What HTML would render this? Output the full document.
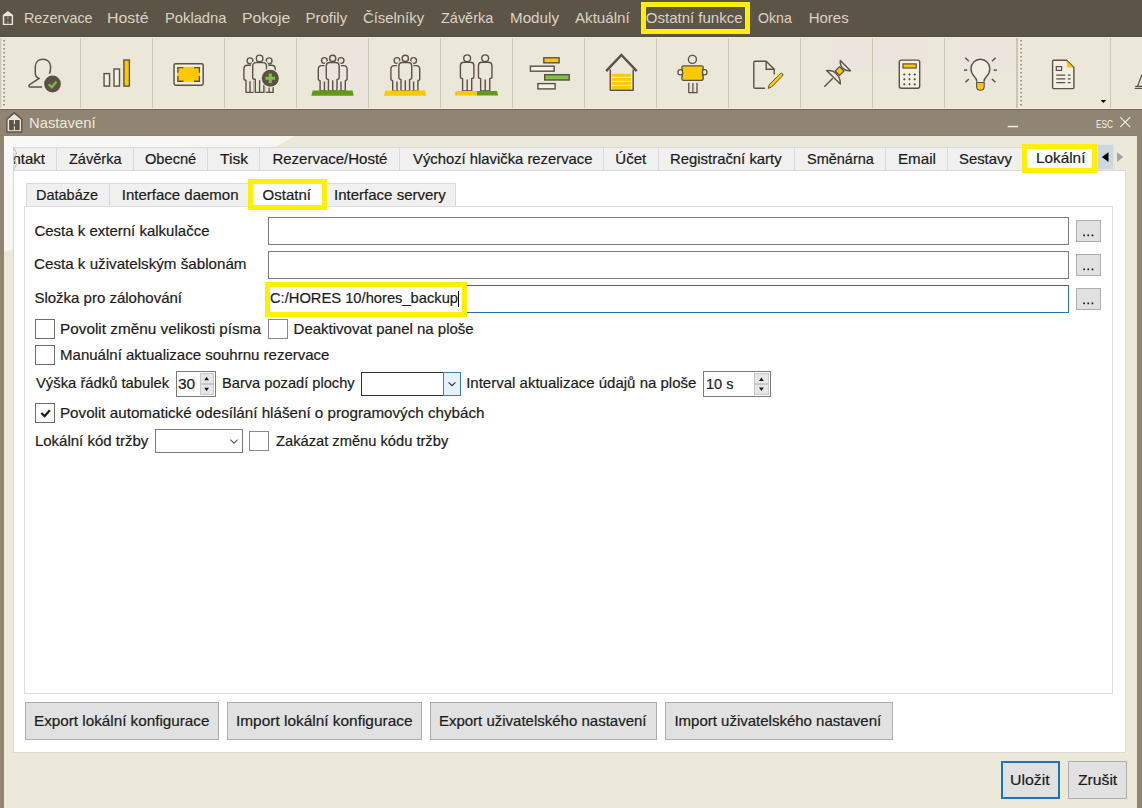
<!DOCTYPE html>
<html><head><meta charset="utf-8">
<style>
html,body{margin:0;padding:0;}
body{width:1142px;height:808px;overflow:hidden;position:relative;background:#ece9db;font-family:"Liberation Sans",sans-serif;}
.a{position:absolute;box-sizing:border-box;}
.tx{position:absolute;white-space:nowrap;line-height:normal;transform-origin:0 0;font-family:"Liberation Sans",sans-serif;-webkit-text-stroke:0.2px currentColor;}
.sep{position:absolute;top:38px;width:1px;height:70px;background:#cdc7b4;}
.tab{position:absolute;box-sizing:border-box;top:147px;height:24px;background:#f0f0f0;border:1px solid #d9d9d9;}
.stab{position:absolute;box-sizing:border-box;top:183px;height:24px;background:#f0f0f0;border:1px solid #d9d9d9;}
.inp{position:absolute;box-sizing:border-box;background:#fff;border:1px solid #7a7a7a;}
.dots{position:absolute;box-sizing:border-box;background:#e1e1e1;border:1px solid #adadad;width:25px;height:22px;}
.cb{position:absolute;box-sizing:border-box;background:#fff;border:1px solid #6e6e6e;width:20px;height:20px;}
.btn{position:absolute;box-sizing:border-box;background:#e1e1e1;border:1px solid #adadad;}
.yb{position:absolute;box-sizing:border-box;border:5px solid #fff000;}
</style></head><body>
<!-- MENU BAR -->
<div class="a" style="left:0;top:0;width:1142px;height:37px;background:#5d5448"></div>
<div class="a" style="left:0;top:36px;width:1142px;height:1px;background:#554c40"></div>
<div class="yb" style="left:641px;top:2px;width:109px;height:32px;"></div>
<!-- TOOLBAR -->
<div class="a" style="left:0;top:37px;width:1142px;height:73px;background:#ece8d9"></div>
<div class="a" style="left:0;top:37px;width:1142px;height:1px;background:#f1ecdc"></div>
<div class="a" style="left:0;top:108px;width:1142px;height:1px;background:#f3eee0"></div>
<div class="a" style="left:320px;top:38px;width:48px;height:70px;background:#ebe5de"></div>
<div class="a" style="left:832px;top:38px;width:97px;height:35px;background:#ebe5de"></div>
<div class="a" style="left:960px;top:38px;width:56px;height:35px;background:#ebe5de"></div>
<div class="sep" style="left:80px"></div>
<div class="sep" style="left:152px"></div>
<div class="sep" style="left:224px"></div>
<div class="sep" style="left:296px"></div>
<div class="sep" style="left:368px"></div>
<div class="sep" style="left:440px"></div>
<div class="sep" style="left:512px"></div>
<div class="sep" style="left:584px"></div>
<div class="sep" style="left:656px"></div>
<div class="sep" style="left:728px"></div>
<div class="sep" style="left:800px"></div>
<div class="sep" style="left:872px"></div>
<div class="sep" style="left:944px"></div>
<div class="sep" style="left:1016px;width:2px;background:#c9c4b2"></div>
<div class="sep" style="left:1110px"></div>
<div class="a" style="left:0;top:109px;width:1142px;height:1px;background:#71685a"></div>
<!-- TITLE BAR -->
<div class="a" style="left:0;top:110px;width:1142px;height:26px;background:#8f8572"></div>
<div class="a" style="left:0;top:135px;width:1137px;height:1px;background:#8a806d"></div>
<!-- DIALOG BODY -->
<div class="a" style="left:4px;top:136px;width:1133px;height:672px;background:#ece9db"></div>
<svg class="a" style="left:0;top:0" width="1142" height="808"><defs><linearGradient id="wg" gradientUnits="userSpaceOnUse" x1="4" y1="136" x2="150" y2="400"><stop offset="0" stop-color="#f8f8f6"/><stop offset="0.55" stop-color="#f6f5f1"/><stop offset="1" stop-color="#efede5"/></linearGradient></defs><path d="M4,136 H295 Q200,190 4,252 Z" fill="url(#wg)"/></svg>
<div class="a" style="left:0;top:136px;width:4px;height:672px;background:#8f8572"></div>
<div class="a" style="left:1137px;top:136px;width:5px;height:672px;background:#8f8572"></div>
<!-- TAB PANEL -->
<div class="a" style="left:13px;top:170px;width:1113px;height:583px;background:#fff;border:1px solid #dadada"></div>
<!-- TABS -->
<div class="tab" style="left:13px;width:44px"></div>
<div class="tab" style="left:56px;width:78px"></div>
<div class="tab" style="left:133px;width:75px"></div>
<div class="tab" style="left:207px;width:53px"></div>
<div class="tab" style="left:259px;width:141px"></div>
<div class="tab" style="left:399px;width:205px"></div>
<div class="tab" style="left:603px;width:56px"></div>
<div class="tab" style="left:658px;width:137px"></div>
<div class="tab" style="left:794px;width:92px"></div>
<div class="tab" style="left:885px;width:63px"></div>
<div class="tab" style="left:947px;width:76px"></div>
<div class="a" style="left:1022px;top:144px;width:75px;height:29px;background:#fff"></div>
<div class="yb" style="left:1022px;top:144px;width:75px;height:29px;"></div>
<div class="a" style="left:1097px;top:144px;width:17px;height:26px;background:#cdd8db;border:1px solid #dce5e7"></div>
<!-- SUBTABS -->
<div class="stab" style="left:26px;width:84px"></div>
<div class="stab" style="left:109px;width:141px"></div>
<div class="stab" style="left:326px;width:130px"></div>
<!-- INNER PANEL -->
<div class="a" style="left:24px;top:206px;width:1089px;height:488px;background:#fff;border:1px solid #dcdcdc"></div>
<div class="a" style="left:253px;top:184px;width:69px;height:23px;background:#fff"></div>
<div class="yb" style="left:248px;top:179px;width:79px;height:31px;"></div>
<!-- INPUTS -->
<div class="inp" style="left:268px;top:217px;width:801px;height:28px"></div>
<div class="inp" style="left:268px;top:251px;width:801px;height:28px"></div>
<div class="inp" style="left:268px;top:285px;width:801px;height:28px;border-color:#2c6ea8"></div>
<div class="dots" style="left:1076px;top:220px"></div>
<div class="dots" style="left:1076px;top:254px"></div>
<div class="dots" style="left:1076px;top:288px"></div>
<div class="yb" style="left:265px;top:282px;width:202px;height:35px;"></div>
<div class="a" style="left:458px;top:291px;width:1px;height:16px;background:#000"></div>
<!-- CHECKBOXES -->
<div class="cb" style="left:35px;top:319px"></div>
<div class="cb" style="left:268px;top:319px;border-color:#8a8a8a"></div>
<div class="cb" style="left:35px;top:345px"></div>
<div class="cb" style="left:35px;top:403px"></div>
<div class="cb" style="left:249px;top:431px;border-color:#8a8a8a"></div>
<!-- SPIN 30 -->
<div class="inp" style="left:176px;top:371px;width:40px;height:26px"></div>
<div class="a" style="left:200px;top:373px;width:14px;height:11px;background:#e6e6e6;border:1px solid #c8c8c8"></div>
<div class="a" style="left:200px;top:384px;width:14px;height:11px;background:#e6e6e6;border:1px solid #c8c8c8"></div>
<!-- COLOR COMBO -->
<div class="inp" style="left:361px;top:372px;width:100px;height:24px;border-color:#333"></div>
<div class="a" style="left:443px;top:372px;width:18px;height:24px;background:#e5f1fb;border:1px solid #3c7fb1"></div>
<!-- SPIN 10 s -->
<div class="inp" style="left:703px;top:371px;width:68px;height:26px"></div>
<div class="a" style="left:754px;top:373px;width:15px;height:11px;background:#e6e6e6;border:1px solid #c8c8c8"></div>
<div class="a" style="left:754px;top:384px;width:15px;height:11px;background:#e6e6e6;border:1px solid #c8c8c8"></div>
<!-- LOCAL CODE COMBO -->
<div class="inp" style="left:155px;top:429px;width:88px;height:24px"></div>
<!-- BUTTONS -->
<div class="btn" style="left:25px;top:702px;width:194px;height:38px"></div>
<div class="btn" style="left:227px;top:702px;width:195px;height:38px"></div>
<div class="btn" style="left:430px;top:702px;width:227px;height:38px"></div>
<div class="btn" style="left:665px;top:702px;width:228px;height:38px"></div>
<div class="btn" style="left:1001px;top:761px;width:59px;height:38px;border:2px solid #1a72c2"></div>
<div class="btn" style="left:1068px;top:761px;width:59px;height:38px"></div>
<!-- TEXT -->
<div class="a" style="left:14px;top:147px;width:31px;height:24px;overflow:hidden"><span class="tx" style="right:0px;top:3px;font-size:15px;color:#1b1b1b">Kontakt</span></div>
<span class="tx" style="left:23.54px;top:9px;font-size:15px;color:#dcd3c1;transform:scaleX(0.9557);-webkit-text-stroke:0;">Rezervace</span>
<span class="tx" style="left:107.44px;top:9px;font-size:15px;color:#dcd3c1;transform:scaleX(1.0605);-webkit-text-stroke:0;">Hosté</span>
<span class="tx" style="left:164.72px;top:9px;font-size:15px;color:#dcd3c1;transform:scaleX(0.9823);-webkit-text-stroke:0;">Pokladna</span>
<span class="tx" style="left:242.35px;top:9px;font-size:15px;color:#dcd3c1;transform:scaleX(1.0523);-webkit-text-stroke:0;">Pokoje</span>
<span class="tx" style="left:305.50px;top:9px;font-size:15px;color:#dcd3c1;-webkit-text-stroke:0;">Profily</span>
<span class="tx" style="left:363.01px;top:9px;font-size:15px;color:#dcd3c1;transform:scaleX(0.9902);-webkit-text-stroke:0;">Číselníky</span>
<span class="tx" style="left:441.40px;top:9px;font-size:15px;color:#dcd3c1;transform:scaleX(0.9648);-webkit-text-stroke:0;">Závěrka</span>
<span class="tx" style="left:509.79px;top:9px;font-size:15px;color:#dcd3c1;transform:scaleX(1.0128);-webkit-text-stroke:0;">Moduly</span>
<span class="tx" style="left:575.40px;top:9px;font-size:15px;color:#dcd3c1;transform:scaleX(1.0093);-webkit-text-stroke:0;">Aktuální</span>
<span class="tx" style="left:645.80px;top:9px;font-size:15px;color:#dcd3c1;-webkit-text-stroke:0;">Ostatní funkce</span>
<span class="tx" style="left:758.36px;top:9px;font-size:15px;color:#dcd3c1;transform:scaleX(0.9429);-webkit-text-stroke:0;">Okna</span>
<span class="tx" style="left:808.70px;top:9px;font-size:15px;color:#dcd3c1;-webkit-text-stroke:0;">Hores</span>
<span class="tx" style="left:29.02px;top:114px;font-size:15px;color:#efe9dc;transform:scaleX(0.9848);-webkit-text-stroke:0;">Nastavení</span>
<span class="tx" style="left:1095.58px;top:119px;font-size:10px;color:#f4f0e8;transform:scaleX(0.8211);-webkit-text-stroke:0;">ESC</span>
<span class="tx" style="left:69.00px;top:150px;font-size:15px;color:#1b1b1b;transform:scaleX(0.9685);">Závěrka</span>
<span class="tx" style="left:145.33px;top:150px;font-size:15px;color:#1b1b1b;transform:scaleX(0.9745);">Obecné</span>
<span class="tx" style="left:220.00px;top:150px;font-size:15px;color:#1b1b1b;transform:scaleX(1.0370);">Tisk</span>
<span class="tx" style="left:272.40px;top:150px;font-size:15px;color:#1b1b1b;">Rezervace/Hosté</span>
<span class="tx" style="left:412.60px;top:150px;font-size:15px;color:#1b1b1b;transform:scaleX(0.9873);">Výchozí hlavička rezervace</span>
<span class="tx" style="left:615.30px;top:150px;font-size:15px;color:#1b1b1b;">Účet</span>
<span class="tx" style="left:670.41px;top:150px;font-size:15px;color:#1b1b1b;transform:scaleX(0.9920);">Registrační karty</span>
<span class="tx" style="left:806.63px;top:150px;font-size:15px;color:#1b1b1b;transform:scaleX(0.9662);">Směnárna</span>
<span class="tx" style="left:897.59px;top:150px;font-size:15px;color:#1b1b1b;transform:scaleX(1.0111);">Email</span>
<span class="tx" style="left:959.31px;top:150px;font-size:15px;color:#1b1b1b;transform:scaleX(0.9904);">Sestavy</span>
<span class="tx" style="left:1035.58px;top:149px;font-size:15px;color:#1b1b1b;transform:scaleX(1.0213);">Lokální</span>
<span class="tx" style="left:35.83px;top:186px;font-size:15px;color:#1b1b1b;transform:scaleX(0.9651);">Databáze</span>
<span class="tx" style="left:121.80px;top:186px;font-size:15px;color:#1b1b1b;">Interface daemon</span>
<span class="tx" style="left:262.60px;top:186px;font-size:15px;color:#1b1b1b;">Ostatní</span>
<span class="tx" style="left:334.10px;top:186px;font-size:15px;color:#1b1b1b;">Interface servery</span>
<span class="tx" style="left:34.40px;top:222px;font-size:15px;color:#1b1b1b;">Cesta k externí kalkulačce</span>
<span class="tx" style="left:34.39px;top:255px;font-size:15px;color:#1b1b1b;transform:scaleX(1.0115);">Cesta k uživatelským šablonám</span>
<span class="tx" style="left:34.40px;top:289px;font-size:15px;color:#1b1b1b;">Složka pro zálohování</span>
<span class="tx" style="left:270.12px;top:289px;font-size:15px;color:#1b1b1b;transform:scaleX(0.9805);">C:/HORES 10/hores_backup</span>
<span class="tx" style="left:60.08px;top:320px;font-size:15px;color:#1b1b1b;transform:scaleX(1.0219);">Povolit změnu velikosti písma</span>
<span class="tx" style="left:293.60px;top:320px;font-size:15px;color:#1b1b1b;">Deaktivovat panel na ploše</span>
<span class="tx" style="left:60.10px;top:346px;font-size:15px;color:#1b1b1b;">Manuální aktualizace souhrnu rezervace</span>
<span class="tx" style="left:35.90px;top:374px;font-size:15px;color:#1b1b1b;transform:scaleX(0.9859);">Výška řádků tabulek</span>
<span class="tx" style="left:178.37px;top:375px;font-size:15px;color:#1b1b1b;transform:scaleX(1.0267);">30</span>
<span class="tx" style="left:221.92px;top:374px;font-size:15px;color:#1b1b1b;transform:scaleX(0.9756);">Barva pozadí plochy</span>
<span class="tx" style="left:466.20px;top:374px;font-size:15px;color:#1b1b1b;">Interval aktualizace údajů na ploše</span>
<span class="tx" style="left:706.03px;top:375px;font-size:15px;color:#1b1b1b;transform:scaleX(0.9704);">10 s</span>
<span class="tx" style="left:59.99px;top:404px;font-size:15px;color:#1b1b1b;transform:scaleX(1.0120);">Povolit automatické odesílání hlášení o programových chybách</span>
<span class="tx" style="left:34.90px;top:432px;font-size:15px;color:#1b1b1b;">Lokální kód tržby</span>
<span class="tx" style="left:275.90px;top:432px;font-size:15px;color:#1b1b1b;transform:scaleX(0.9790);">Zakázat změnu kódu tržby</span>
<span class="tx" style="left:33.98px;top:712px;font-size:15px;color:#1b1b1b;transform:scaleX(1.0164);">Export lokální konfigurace</span>
<span class="tx" style="left:235.87px;top:712px;font-size:15px;color:#1b1b1b;transform:scaleX(1.0276);">Import lokální konfigurace</span>
<span class="tx" style="left:438.90px;top:712px;font-size:15px;color:#1b1b1b;">Export uživatelského nastavení</span>
<span class="tx" style="left:674.40px;top:712px;font-size:15px;color:#1b1b1b;">Import uživatelského nastavení</span>
<span class="tx" style="left:1009.94px;top:771px;font-size:15px;color:#1b1b1b;transform:scaleX(1.0583);">Uložit</span>
<span class="tx" style="left:1077.80px;top:771px;font-size:15px;color:#1b1b1b;transform:scaleX(1.0459);">Zrušit</span>
<!-- ICONS -->
<svg class="a" style="left:0;top:0" width="1142" height="808" viewBox="0 0 1142 808">
<path d="M2.8,25 V14.9 L7.9,10.9 L13.1,14.9 V25 Z" fill="#ebe5d4"/>
<rect x="4.3" y="16.1" width="7.3" height="7.7" fill="#5d5448"/>
<path d="M7.95,16.1 V19.3 M7.95,20.8 V23.8" stroke="#9a9183" stroke-width="1.2"/>
<path d="M6.9,132 V119.3 L14.3,112.9 L21.7,119.3 V132 Z" fill="#eee8dc" stroke="#5d5448" stroke-width="1.4" stroke-linejoin="round"/>
<rect x="9.1" y="120" width="10.6" height="10.2" fill="#5d5448"/>
<path d="M14.4,120 V124.2 M14.4,126.2 V130.2" stroke="#eee8dc" stroke-width="1.1"/>
<rect x="1007.7" y="125.8" width="10.3" height="1.5" fill="#f2eee6"/>
<path d="M1120.2,117.2 L1130.2,127.2 M1130.2,117.2 L1120.2,127.2" stroke="#f4f1ea" stroke-width="1.1"/>
<rect x="0" y="38" width="1.5" height="70" fill="#d2ccbb"/>
<rect x="2.4000000000000004" y="40.9" width="1.6" height="1.6" fill="#fbfaf5"/>
<rect x="3.2" y="40" width="1.6" height="1.6" fill="#8c8779"/>
<rect x="2.4000000000000004" y="44.9" width="1.6" height="1.6" fill="#fbfaf5"/>
<rect x="3.2" y="44" width="1.6" height="1.6" fill="#8c8779"/>
<rect x="2.4000000000000004" y="48.9" width="1.6" height="1.6" fill="#fbfaf5"/>
<rect x="3.2" y="48" width="1.6" height="1.6" fill="#8c8779"/>
<rect x="2.4000000000000004" y="52.9" width="1.6" height="1.6" fill="#fbfaf5"/>
<rect x="3.2" y="52" width="1.6" height="1.6" fill="#8c8779"/>
<rect x="2.4000000000000004" y="56.9" width="1.6" height="1.6" fill="#fbfaf5"/>
<rect x="3.2" y="56" width="1.6" height="1.6" fill="#8c8779"/>
<rect x="2.4000000000000004" y="60.9" width="1.6" height="1.6" fill="#fbfaf5"/>
<rect x="3.2" y="60" width="1.6" height="1.6" fill="#8c8779"/>
<rect x="2.4000000000000004" y="64.9" width="1.6" height="1.6" fill="#fbfaf5"/>
<rect x="3.2" y="64" width="1.6" height="1.6" fill="#8c8779"/>
<rect x="2.4000000000000004" y="68.9" width="1.6" height="1.6" fill="#fbfaf5"/>
<rect x="3.2" y="68" width="1.6" height="1.6" fill="#8c8779"/>
<rect x="2.4000000000000004" y="72.9" width="1.6" height="1.6" fill="#fbfaf5"/>
<rect x="3.2" y="72" width="1.6" height="1.6" fill="#8c8779"/>
<rect x="2.4000000000000004" y="76.9" width="1.6" height="1.6" fill="#fbfaf5"/>
<rect x="3.2" y="76" width="1.6" height="1.6" fill="#8c8779"/>
<rect x="2.4000000000000004" y="80.9" width="1.6" height="1.6" fill="#fbfaf5"/>
<rect x="3.2" y="80" width="1.6" height="1.6" fill="#8c8779"/>
<rect x="2.4000000000000004" y="84.9" width="1.6" height="1.6" fill="#fbfaf5"/>
<rect x="3.2" y="84" width="1.6" height="1.6" fill="#8c8779"/>
<rect x="2.4000000000000004" y="88.9" width="1.6" height="1.6" fill="#fbfaf5"/>
<rect x="3.2" y="88" width="1.6" height="1.6" fill="#8c8779"/>
<rect x="2.4000000000000004" y="92.9" width="1.6" height="1.6" fill="#fbfaf5"/>
<rect x="3.2" y="92" width="1.6" height="1.6" fill="#8c8779"/>
<rect x="2.4000000000000004" y="96.9" width="1.6" height="1.6" fill="#fbfaf5"/>
<rect x="3.2" y="96" width="1.6" height="1.6" fill="#8c8779"/>
<rect x="2.4000000000000004" y="100.9" width="1.6" height="1.6" fill="#fbfaf5"/>
<rect x="3.2" y="100" width="1.6" height="1.6" fill="#8c8779"/>
<rect x="2.4000000000000004" y="104.9" width="1.6" height="1.6" fill="#fbfaf5"/>
<rect x="3.2" y="104" width="1.6" height="1.6" fill="#8c8779"/>
<rect x="1019.4000000000001" y="40.9" width="1.6" height="1.6" fill="#fbfaf5"/>
<rect x="1020.2" y="40" width="1.6" height="1.6" fill="#8c8779"/>
<rect x="1019.4000000000001" y="44.9" width="1.6" height="1.6" fill="#fbfaf5"/>
<rect x="1020.2" y="44" width="1.6" height="1.6" fill="#8c8779"/>
<rect x="1019.4000000000001" y="48.9" width="1.6" height="1.6" fill="#fbfaf5"/>
<rect x="1020.2" y="48" width="1.6" height="1.6" fill="#8c8779"/>
<rect x="1019.4000000000001" y="52.9" width="1.6" height="1.6" fill="#fbfaf5"/>
<rect x="1020.2" y="52" width="1.6" height="1.6" fill="#8c8779"/>
<rect x="1019.4000000000001" y="56.9" width="1.6" height="1.6" fill="#fbfaf5"/>
<rect x="1020.2" y="56" width="1.6" height="1.6" fill="#8c8779"/>
<rect x="1019.4000000000001" y="60.9" width="1.6" height="1.6" fill="#fbfaf5"/>
<rect x="1020.2" y="60" width="1.6" height="1.6" fill="#8c8779"/>
<rect x="1019.4000000000001" y="64.9" width="1.6" height="1.6" fill="#fbfaf5"/>
<rect x="1020.2" y="64" width="1.6" height="1.6" fill="#8c8779"/>
<rect x="1019.4000000000001" y="68.9" width="1.6" height="1.6" fill="#fbfaf5"/>
<rect x="1020.2" y="68" width="1.6" height="1.6" fill="#8c8779"/>
<rect x="1019.4000000000001" y="72.9" width="1.6" height="1.6" fill="#fbfaf5"/>
<rect x="1020.2" y="72" width="1.6" height="1.6" fill="#8c8779"/>
<rect x="1019.4000000000001" y="76.9" width="1.6" height="1.6" fill="#fbfaf5"/>
<rect x="1020.2" y="76" width="1.6" height="1.6" fill="#8c8779"/>
<rect x="1019.4000000000001" y="80.9" width="1.6" height="1.6" fill="#fbfaf5"/>
<rect x="1020.2" y="80" width="1.6" height="1.6" fill="#8c8779"/>
<rect x="1019.4000000000001" y="84.9" width="1.6" height="1.6" fill="#fbfaf5"/>
<rect x="1020.2" y="84" width="1.6" height="1.6" fill="#8c8779"/>
<rect x="1019.4000000000001" y="88.9" width="1.6" height="1.6" fill="#fbfaf5"/>
<rect x="1020.2" y="88" width="1.6" height="1.6" fill="#8c8779"/>
<rect x="1019.4000000000001" y="92.9" width="1.6" height="1.6" fill="#fbfaf5"/>
<rect x="1020.2" y="92" width="1.6" height="1.6" fill="#8c8779"/>
<rect x="1019.4000000000001" y="96.9" width="1.6" height="1.6" fill="#fbfaf5"/>
<rect x="1020.2" y="96" width="1.6" height="1.6" fill="#8c8779"/>
<rect x="1019.4000000000001" y="100.9" width="1.6" height="1.6" fill="#fbfaf5"/>
<rect x="1020.2" y="100" width="1.6" height="1.6" fill="#8c8779"/>
<rect x="1019.4000000000001" y="104.9" width="1.6" height="1.6" fill="#fbfaf5"/>
<rect x="1020.2" y="104" width="1.6" height="1.6" fill="#8c8779"/>
<path d="M49.6,73.8 C50.4,71.5 50.6,68.5 50.6,66.8 C50.6,62 47.3,59.3 42.9,59.3 C38.5,59.3 35.3,62.2 35.3,66.8 L35.3,73 C35.3,76 37,77.8 39.2,78.4 L29.6,84.6 C28.4,85.4 28.9,87.1 30.2,87.1 L42,87.1" fill="none" stroke="#5b5145" stroke-width="1.5" stroke-linejoin="round"/>
<circle cx="52.5" cy="84" r="8.4" fill="#5b5145"/>
<path d="M48.7,84.3 L51.8,87.3 L56.4,81.6" fill="none" stroke="#7dc142" stroke-width="2.2"/>
<rect x="104.05" y="73.6" width="5.5" height="12.5" fill="#f3efe2" stroke="#5b5145" stroke-width="1.4"/>
<rect x="114.0" y="69.0" width="5.5" height="17.1" fill="#f3efe2" stroke="#5b5145" stroke-width="1.4"/>
<rect x="123.9" y="60.0" width="5.5" height="26.1" fill="#fbc900" stroke="#5b5145" stroke-width="1.4"/>
<rect x="174.05" y="63.75" width="29.1" height="21.4" rx="1.6" fill="#f3efe2" stroke="#5b5145" stroke-width="1.5"/>
<rect x="177.2" y="66.9" width="22.8" height="14.9" fill="#fbc900"/>
<path d="M177.9,72.8 V67.6 H183.4 M194.0,67.6 H199.4 V72.8 M199.4,76.0 V81.2 H194.0 M183.4,81.2 H177.9 V76.0" fill="none" stroke="#5b5145" stroke-width="1.4"/>
<path d="M246.00,92.40 V80.50 L244.90,80.00 Q243.90,80.00 243.90,79.00 V68.80 Q243.90,65.20 247.50,65.20 H252.50 Q256.10,65.20 256.10,68.80 V79.00 Q256.10,80.00 255.10,80.00 L254.00,80.50 V92.40 Z" fill="#ece8d9" stroke="#5b5145" stroke-width="1.4" stroke-linejoin="round"/>
<path d="M250.00,92.40 V81.20" stroke="#5b5145" stroke-width="1.4"/>
<circle cx="250.00" cy="60.80" r="2.90" fill="#ece8d9" stroke="#5b5145" stroke-width="1.4"/>
<path d="M265.10,92.40 V80.50 L264.00,80.00 Q263.00,80.00 263.00,79.00 V68.80 Q263.00,65.20 266.60,65.20 H271.60 Q275.20,65.20 275.20,68.80 V79.00 Q275.20,80.00 274.20,80.00 L273.10,80.50 V92.40 Z" fill="#ece8d9" stroke="#5b5145" stroke-width="1.4" stroke-linejoin="round"/>
<path d="M269.10,92.40 V81.20" stroke="#5b5145" stroke-width="1.4"/>
<circle cx="269.10" cy="60.80" r="2.90" fill="#ece8d9" stroke="#5b5145" stroke-width="1.4"/>
<path d="M255.30,92.40 V79.50 L253.70,79.00 Q252.70,79.00 252.70,78.00 V66.20 Q252.70,62.60 256.30,62.60 H262.90 Q266.50,62.60 266.50,66.20 V78.00 Q266.50,79.00 265.50,79.00 L263.90,79.50 V92.40 Z" fill="#ece8d9" stroke="#ece8d9" stroke-width="3.6" stroke-linejoin="round"/>
<circle cx="259.60" cy="58.40" r="3.30" fill="#ece8d9" stroke="#ece8d9" stroke-width="3.6"/>
<path d="M255.30,92.40 V79.50 L253.70,79.00 Q252.70,79.00 252.70,78.00 V66.20 Q252.70,62.60 256.30,62.60 H262.90 Q266.50,62.60 266.50,66.20 V78.00 Q266.50,79.00 265.50,79.00 L263.90,79.50 V92.40 Z" fill="#ece8d9" stroke="#5b5145" stroke-width="1.4" stroke-linejoin="round"/>
<path d="M259.60,92.40 V80.20" stroke="#5b5145" stroke-width="1.4"/>
<circle cx="259.60" cy="58.40" r="3.30" fill="#ece8d9" stroke="#5b5145" stroke-width="1.4"/>
<circle cx="270.3" cy="78.2" r="9.6" fill="#ece8d9"/>
<circle cx="270.3" cy="78.2" r="8.5" fill="#5b5145"/>
<path d="M270.3,73.4 V83.0 M265.5,78.2 H275.1" stroke="#7dc142" stroke-width="3"/>
<path d="M320.10,91.00 V80.80 L319.30,80.30 Q318.30,80.30 318.30,79.30 V69.20 Q318.30,65.60 321.90,65.60 H326.90 Q330.50,65.60 330.50,69.20 V79.30 Q330.50,80.30 329.50,80.30 L328.70,80.80 V91.00 Z" fill="#ebe5de" stroke="#5b5145" stroke-width="1.4" stroke-linejoin="round"/>
<path d="M324.40,91.00 V81.50" stroke="#5b5145" stroke-width="1.4"/>
<circle cx="324.40" cy="60.50" r="2.90" fill="#ebe5de" stroke="#5b5145" stroke-width="1.4"/>
<path d="M336.70,91.00 V80.80 L335.90,80.30 Q334.90,80.30 334.90,79.30 V69.20 Q334.90,65.60 338.50,65.60 H343.50 Q347.10,65.60 347.10,69.20 V79.30 Q347.10,80.30 346.10,80.30 L345.30,80.80 V91.00 Z" fill="#ebe5de" stroke="#5b5145" stroke-width="1.4" stroke-linejoin="round"/>
<path d="M341.00,91.00 V81.50" stroke="#5b5145" stroke-width="1.4"/>
<circle cx="341.00" cy="60.50" r="2.90" fill="#ebe5de" stroke="#5b5145" stroke-width="1.4"/>
<path d="M328.40,91.00 V79.60 L327.25,79.10 Q326.25,79.10 326.25,78.10 V66.10 Q326.25,62.50 329.85,62.50 H335.55 Q339.15,62.50 339.15,66.10 V78.10 Q339.15,79.10 338.15,79.10 L337.00,79.60 V91.00 Z" fill="#ebe5de" stroke="#ebe5de" stroke-width="3.6" stroke-linejoin="round"/>
<circle cx="332.70" cy="58.40" r="3.10" fill="#ebe5de" stroke="#ebe5de" stroke-width="3.6"/>
<path d="M328.40,91.00 V79.60 L327.25,79.10 Q326.25,79.10 326.25,78.10 V66.10 Q326.25,62.50 329.85,62.50 H335.55 Q339.15,62.50 339.15,66.10 V78.10 Q339.15,79.10 338.15,79.10 L337.00,79.60 V91.00 Z" fill="#ebe5de" stroke="#5b5145" stroke-width="1.4" stroke-linejoin="round"/>
<path d="M332.70,91.00 V80.30" stroke="#5b5145" stroke-width="1.4"/>
<circle cx="332.70" cy="58.40" r="3.10" fill="#ebe5de" stroke="#5b5145" stroke-width="1.4"/>
<path d="M312.60,90.4 H352.60 L353.60,95.8 H311.30 Z" fill="#5f9b10"/>
<path d="M392.70,91.00 V80.80 L391.90,80.30 Q390.90,80.30 390.90,79.30 V69.20 Q390.90,65.60 394.50,65.60 H399.50 Q403.10,65.60 403.10,69.20 V79.30 Q403.10,80.30 402.10,80.30 L401.30,80.80 V91.00 Z" fill="#ece8d9" stroke="#5b5145" stroke-width="1.4" stroke-linejoin="round"/>
<path d="M397.00,91.00 V81.50" stroke="#5b5145" stroke-width="1.4"/>
<circle cx="397.00" cy="60.50" r="2.90" fill="#ece8d9" stroke="#5b5145" stroke-width="1.4"/>
<path d="M409.30,91.00 V80.80 L408.50,80.30 Q407.50,80.30 407.50,79.30 V69.20 Q407.50,65.60 411.10,65.60 H416.10 Q419.70,65.60 419.70,69.20 V79.30 Q419.70,80.30 418.70,80.30 L417.90,80.80 V91.00 Z" fill="#ece8d9" stroke="#5b5145" stroke-width="1.4" stroke-linejoin="round"/>
<path d="M413.60,91.00 V81.50" stroke="#5b5145" stroke-width="1.4"/>
<circle cx="413.60" cy="60.50" r="2.90" fill="#ece8d9" stroke="#5b5145" stroke-width="1.4"/>
<path d="M401.00,91.00 V79.60 L399.85,79.10 Q398.85,79.10 398.85,78.10 V66.10 Q398.85,62.50 402.45,62.50 H408.15 Q411.75,62.50 411.75,66.10 V78.10 Q411.75,79.10 410.75,79.10 L409.60,79.60 V91.00 Z" fill="#ece8d9" stroke="#ece8d9" stroke-width="3.6" stroke-linejoin="round"/>
<circle cx="405.30" cy="58.40" r="3.10" fill="#ece8d9" stroke="#ece8d9" stroke-width="3.6"/>
<path d="M401.00,91.00 V79.60 L399.85,79.10 Q398.85,79.10 398.85,78.10 V66.10 Q398.85,62.50 402.45,62.50 H408.15 Q411.75,62.50 411.75,66.10 V78.10 Q411.75,79.10 410.75,79.10 L409.60,79.60 V91.00 Z" fill="#ece8d9" stroke="#5b5145" stroke-width="1.4" stroke-linejoin="round"/>
<path d="M405.30,91.00 V80.30" stroke="#5b5145" stroke-width="1.4"/>
<circle cx="405.30" cy="58.40" r="3.10" fill="#ece8d9" stroke="#5b5145" stroke-width="1.4"/>
<path d="M385.20,90.4 H425.20 L426.20,95.8 H383.90 Z" fill="#fbc900"/>
<path d="M462.60,90.90 V78.70 L461.40,78.20 Q460.40,78.20 460.40,77.20 V65.90 Q460.40,62.30 464.00,62.30 H470.30 Q473.90,62.30 473.90,65.90 V77.20 Q473.90,78.20 472.90,78.20 L471.70,78.70 V90.90 Z" fill="#ece8d9" stroke="#5b5145" stroke-width="1.4" stroke-linejoin="round"/>
<path d="M467.15,90.90 V79.40" stroke="#5b5145" stroke-width="1.4"/>
<circle cx="467.15" cy="58.30" r="3.40" fill="#ece8d9" stroke="#5b5145" stroke-width="1.4"/>
<path d="M480.65,90.90 V78.70 L479.45,78.20 Q478.45,78.20 478.45,77.20 V65.90 Q478.45,62.30 482.05,62.30 H488.35 Q491.95,62.30 491.95,65.90 V77.20 Q491.95,78.20 490.95,78.20 L489.75,78.70 V90.90 Z" fill="#ece8d9" stroke="#5b5145" stroke-width="1.4" stroke-linejoin="round"/>
<path d="M485.20,90.90 V79.40" stroke="#5b5145" stroke-width="1.4"/>
<circle cx="485.20" cy="58.30" r="3.40" fill="#ece8d9" stroke="#5b5145" stroke-width="1.4"/>
<path d="M455.7,91 H476.9 V95.6 H454.6 Z" fill="#fbc900"/>
<path d="M476.9,91 H497 L498.2,95.6 H476.9 Z" fill="#5f9b10"/>
<rect x="543.8" y="57.8" width="15.3" height="5.0" fill="#fbc900" stroke="#5b5145" stroke-width="1.4"/>
<rect x="530.4" y="66.2" width="23.8" height="5.0" fill="#f5f2e8" stroke="#5b5145" stroke-width="1.4"/>
<rect x="544.7" y="74.7" width="24.5" height="5.3" fill="#7dc142" stroke="#5b5145" stroke-width="1.4"/>
<rect x="537.9" y="83.6" width="17.2" height="5.3" fill="#f5f2e8" stroke="#5b5145" stroke-width="1.4"/>
<rect x="612" y="73.8" width="19.2" height="2.9" fill="#fbc900"/>
<rect x="612" y="77.9" width="19.2" height="2.9" fill="#fbc900"/>
<rect x="612" y="82.0" width="19.2" height="2.9" fill="#fbc900"/>
<rect x="612" y="86.0" width="19.2" height="2.9" fill="#fbc900"/>
<path d="M610.3,69.5 V90.3 H633.2 V69.5" fill="none" stroke="#5b5145" stroke-width="1.5" stroke-linejoin="round"/>
<path d="M607,70.2 L621.4,55 L635.9,70.2" fill="none" stroke="#5b5145" stroke-width="2.4" stroke-linecap="square"/>
<circle cx="692.4" cy="59.4" r="4.0" fill="none" stroke="#5b5145" stroke-width="1.4"/>
<path d="M688.8,82.8 V92.6 H697.0 V82.8 M692.9,92.6 V83" fill="none" stroke="#5b5145" stroke-width="1.3"/>
<circle cx="680.5" cy="72.3" r="2.6" fill="#f5f2e8" stroke="#5b5145" stroke-width="1.3"/>
<circle cx="704.4" cy="72.3" r="2.6" fill="#f5f2e8" stroke="#5b5145" stroke-width="1.3"/>
<path d="M683.5,65.9 H701.6 Q703.3,65.9 703.3,67.6 Q701.6,72.3 703.3,77.6 Q703.3,80.3 701.6,80.3 H683.5 Q681.8,80.3 681.8,78.6 Q683.3,72.3 681.8,67.6 Q681.8,65.9 683.5,65.9 Z" fill="#fbc900" stroke="#5b5145" stroke-width="1.3"/>
<path d="M765.1,88.3 H755.0 Q753.8,88.3 753.8,87.1 V62.5 Q753.8,61.3 755.0,61.3 H766.2 L774.2,69.2 V74.5" fill="none" stroke="#5b5145" stroke-width="1.4" stroke-linejoin="round"/>
<path d="M766.2,61.3 V69.2 H774.2" fill="none" stroke="#5b5145" stroke-width="1.4"/>
<path d="M768.2,88.4 L769.3,84.6 L780.2,73.7 Q781.6,72.6 782.6,73.8 Q783.6,74.9 782.3,76.1 L771.6,87.0 Z" fill="#fbc900" stroke="#5b5145" stroke-width="1.0" stroke-linejoin="round"/>
<path d="M824.3,86.8 L832.8,78.2" stroke="#5b5145" stroke-width="1.4"/>
<path d="M826.6,70.6 Q833.5,69.8 836.5,74.2 Q840.5,77.6 840.3,84.1 Z" fill="#ece8d9" stroke="#5b5145" stroke-width="1.4" stroke-linejoin="round"/>
<path d="M840.3,60.5 L850.5,70.8 Q845.8,71.3 842.8,68.2 Q839.8,65.2 840.3,60.5 Z" fill="#ebe5de" stroke="#5b5145" stroke-width="1.4" stroke-linejoin="round"/>
<path d="M839.6,66.6 L844.0,71.0 L839.6,75.4 L835.2,71.0 Z" fill="#fbc900" stroke="#5b5145" stroke-width="1.2" stroke-linejoin="round"/>
<rect x="899.3" y="60.1" width="20.4" height="28.1" rx="2" fill="#f3efe4" stroke="#5b5145" stroke-width="1.4"/>
<rect x="903.0" y="63.9" width="13.2" height="4.1" fill="#fbc900" stroke="#5b5145" stroke-width="1.2"/>
<path d="M903.1999999999999,74.5 H905.4 M904.3,73.4 V75.6" stroke="#5b5145" stroke-width="1"/>
<path d="M903.1999999999999,79.3 H905.4 M904.3,78.2 V80.39999999999999" stroke="#5b5145" stroke-width="1"/>
<path d="M903.1999999999999,84.3 H905.4 M904.3,83.2 V85.39999999999999" stroke="#5b5145" stroke-width="1"/>
<path d="M908.4,74.5 H910.6 M909.5,73.4 V75.6" stroke="#5b5145" stroke-width="1"/>
<path d="M908.4,79.3 H910.6 M909.5,78.2 V80.39999999999999" stroke="#5b5145" stroke-width="1"/>
<path d="M908.4,84.3 H910.6 M909.5,83.2 V85.39999999999999" stroke="#5b5145" stroke-width="1"/>
<path d="M913.6,74.5 H915.8000000000001 M914.7,73.4 V75.6" stroke="#5b5145" stroke-width="1"/>
<path d="M913.6,79.3 H915.8000000000001 M914.7,78.2 V80.39999999999999" stroke="#5b5145" stroke-width="1"/>
<path d="M913.6,84.3 H915.8000000000001 M914.7,83.2 V85.39999999999999" stroke="#5b5145" stroke-width="1"/>
<path d="M976.9,81.6 Q976.6,78.9 974.3,76.6 Q971,73.2 971,68.6 A9.4,9.4 0 0 1 989.8,68.6 Q989.8,73.2 986.5,76.6 Q984.2,78.9 983.9,81.6" fill="#f1eee6" stroke="#5b5145" stroke-width="1.4"/>
<path d="M976.6,82.5 H984.2 V86.5 Q984.2,90.2 980.4,90.2 Q976.6,90.2 976.6,86.5 Z" fill="#fbc900" stroke="#5b5145" stroke-width="1.1"/>
<path d="M965.2,57.8 L968.9,61.2" stroke="#5b5145" stroke-width="1.5"/>
<path d="M963.9,70.1 L967.2,70.1" stroke="#5b5145" stroke-width="1.5"/>
<path d="M965.4,82.2 L968.9,79" stroke="#5b5145" stroke-width="1.5"/>
<path d="M995.6,57.8 L991.9,61.2" stroke="#5b5145" stroke-width="1.5"/>
<path d="M996.9,70.1 L993.6,70.1" stroke="#5b5145" stroke-width="1.5"/>
<path d="M995.4,82.2 L991.9,79" stroke="#5b5145" stroke-width="1.5"/>
<path d="M1066.6,60.3 H1053.6 Q1052.6,60.3 1052.6,61.3 V87.6 Q1052.6,88.6 1053.6,88.6 H1072.9 Q1073.9,88.6 1073.9,87.6 V67.4 Z" fill="#f3efe4" stroke="#5b5145" stroke-width="1.4" stroke-linejoin="round"/>
<path d="M1066.8,60.8 L1073.4,67.4 H1066.8 Z" fill="#fbc900"/>
<rect x="1056.3" y="66.6" width="5.3" height="3.8" fill="none" stroke="#5b5145" stroke-width="1.2"/>
<path d="M1056.2,75.2 H1065.3 M1067.8,75.2 H1070.6" stroke="#5b5145" stroke-width="1.3"/>
<path d="M1056.2,78.9 H1065.3 M1067.8,78.9 H1070.6" stroke="#5b5145" stroke-width="1.3"/>
<path d="M1056.2,82.6 H1065.3 M1067.8,82.6 H1070.6" stroke="#5b5145" stroke-width="1.3"/>
<path d="M1100.6,100.1 H1106.2 L1103.4,103.1 Z" fill="#000"/>
<path d="M1142,74.5 L1137.6,86.2 M1134.8,88.3 H1142 M1135.2,86.4 H1142" stroke="#5b5145" stroke-width="1.3" fill="none"/>
<path d="M13.5,147.5 L16.5,153 L13.5,159 L16.5,164.5 L13.5,170" fill="none" stroke="#b9b9b9" stroke-width="1"/>
<path d="M1108.5,152.2 V162 L1101.9,157.1 Z" fill="#000"/>
<path d="M1117,152.2 V162 L1123.3,157.1 Z" fill="#a3a3a3"/>
<rect x="1083.2" y="234.5" width="1.7" height="1.7" fill="#1a1a1a"/>
<rect x="1087.4" y="234.5" width="1.7" height="1.7" fill="#1a1a1a"/>
<rect x="1091.6" y="234.5" width="1.7" height="1.7" fill="#1a1a1a"/>
<rect x="1083.2" y="268.5" width="1.7" height="1.7" fill="#1a1a1a"/>
<rect x="1087.4" y="268.5" width="1.7" height="1.7" fill="#1a1a1a"/>
<rect x="1091.6" y="268.5" width="1.7" height="1.7" fill="#1a1a1a"/>
<rect x="1083.2" y="302.5" width="1.7" height="1.7" fill="#1a1a1a"/>
<rect x="1087.4" y="302.5" width="1.7" height="1.7" fill="#1a1a1a"/>
<rect x="1091.6" y="302.5" width="1.7" height="1.7" fill="#1a1a1a"/>
<path d="M41.3,413.0 L44.6,416.2 L49.8,410.2" fill="none" stroke="#1a1a1a" stroke-width="2.2"/>
<path d="M204.2,380.2 L206.6,376.8 L209.0,380.2 Z" fill="#1a1a1a"/>
<path d="M204.2,387.8 L206.6,391.2 L209.0,387.8 Z" fill="#1a1a1a"/>
<path d="M759,381 L761.4,377.6 L763.8,381 Z" fill="#1a1a1a"/>
<path d="M759,387.6 L761.4,391 L763.8,387.6 Z" fill="#1a1a1a"/>
<path d="M448.6,382.3 L452,385.7 L455.4,382.3" fill="none" stroke="#333" stroke-width="1.1"/>
<path d="M230.4,439.6 L234,443.2 L237.6,439.6" fill="none" stroke="#555" stroke-width="1.1"/>
</svg>
</body></html>
